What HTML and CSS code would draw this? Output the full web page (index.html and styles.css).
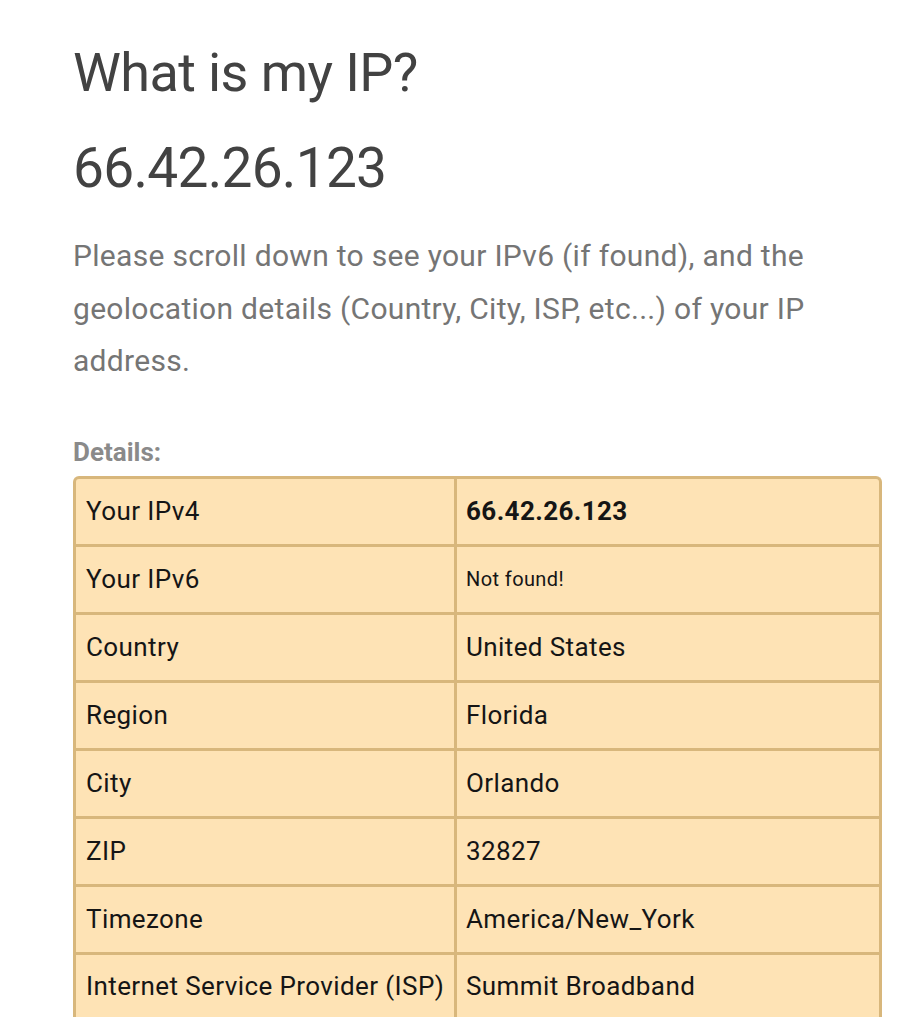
FILE: index.html
```html
<!DOCTYPE html>
<html>
<head>
<meta charset="utf-8">
<link rel="stylesheet" href="styles.css">
</head>
<body>
<main class="page">
  <h1 class="title">What is my IP?</h1>
  <h2 class="ip">66.42.26.123</h2>
  <p class="intro">Please scroll down to see your IPv6 (if found), and the geolocation details (Country, City, ISP, etc...) of your IP address.</p>
  <div class="label">Details:</div>
  <table class="details">
    <tr><td class="key">Your IPv4</td><td class="val strong">66.42.26.123</td></tr>
    <tr><td class="key">Your IPv6</td><td class="val small">Not found!</td></tr>
    <tr><td class="key">Country</td><td class="val">United States</td></tr>
    <tr><td class="key">Region</td><td class="val">Florida</td></tr>
    <tr><td class="key">City</td><td class="val">Orlando</td></tr>
    <tr><td class="key">ZIP</td><td class="val">32827</td></tr>
    <tr><td class="key">Timezone</td><td class="val">America/New_York</td></tr>
    <tr class="last"><td class="key">Internet Service Provider (ISP)</td><td class="val">Summit Broadband</td></tr>
  </table>
</main>
</body>
</html>
```

FILE: styles.css
```css
html, body {
  margin: 0;
  padding: 0;
  background: #ffffff;
}
body {
  font-family: Roboto, "Liberation Sans", sans-serif;
}
.page {
  padding: 43px 0 0 73px;
  width: 809px;
}
.title {
  margin: 0;
  font-size: 54px;
  font-weight: 400;
  letter-spacing: -0.6px;
  line-height: 60px;
  color: #424242;
}
.ip {
  margin: 35px 0 0 0;
  font-size: 55px;
  font-weight: 400;
  letter-spacing: -0.7px;
  line-height: 60px;
  color: #424242;
}
.intro {
  margin: 32px 0 0 0;
  font-size: 30px;
  letter-spacing: 0.3px;
  line-height: 52.5px;
  color: #757575;
}
.label {
  margin-top: 49px;
  font-size: 26px;
  font-weight: 700;
  line-height: 30px;
  color: #8a8a8a;
}
.details {
  margin-top: 9px;
  width: 809px;
  table-layout: fixed;
  border-collapse: separate;
  border-spacing: 0;
  background: #fee3b5;
  border: 3px solid #d8b77c;
  border-bottom: none;
  border-radius: 6px 6px 0 0;
}
.details td {
  height: 68px;
  padding: 0 4px 0 10px;
  font-size: 26px;
  letter-spacing: 0.4px;
  white-space: nowrap;
  color: #151515;
  border-bottom: 3px solid #d8b77c;
  vertical-align: middle;
  box-sizing: border-box;
}
.details tr.last td {
  height: 62px;
  border-bottom: none;
}
.key {
  width: 381px;
  border-right: 3px solid #d8b77c;
}
.val {
  padding-left: 9px !important;
}
.strong {
  font-weight: 700;
}
.small {
  font-size: 20px !important;
}
```
